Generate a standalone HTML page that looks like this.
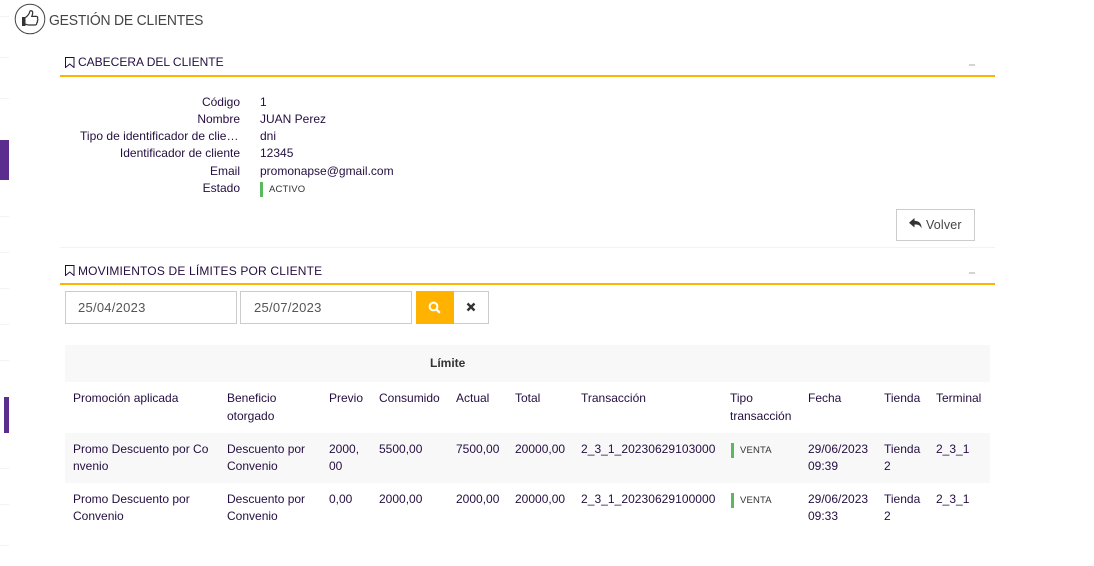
<!DOCTYPE html>
<html lang="es"><head><meta charset="utf-8"><title>Gestión de clientes</title>
<style>
html,body{margin:0;padding:0;background:#fff}
#p{position:relative;width:1094px;height:566px;overflow:hidden;background:#fff;font-family:"Liberation Sans",Arial,sans-serif;font-size:12px;color:#240e40}
#p div,#p svg{position:absolute}
.t{white-space:nowrap;line-height:14px;letter-spacing:0}
.r{text-align:right;width:220px;left:20px}
.l{left:0;width:9px;height:1px;background:#f3f3f3}
.h{font-size:12px;color:#240e40}
.b{height:2px;background:#ffb300;left:60px;width:935px}
.m{left:969px;width:6px;height:2px;background:#d4d4d4}
.g{width:3px;background:#5cb85c}
.s{font-size:9.500px;color:#333;letter-spacing:.15px}
.i{height:31px;border:1px solid #ccc;background:#fff;color:#555;font-size:13px;line-height:31px;letter-spacing:.25px;box-sizing:content-box}
.bg{background:#f8f8f8;left:65px;width:925px}
</style></head><body><div id="p">
<div class="l" style="top:16px"></div><div class="l" style="top:57px"></div><div class="l" style="top:98px"></div>
<div style="left:0;top:140px;width:9px;height:40px;background:#5b2d8e"></div>
<div class="l" style="top:216px"></div><div class="l" style="top:252px"></div><div class="l" style="top:288px"></div><div class="l" style="top:324px"></div><div class="l" style="top:360px"></div>
<div style="left:4px;top:397px;width:5px;height:36px;background:#5b2d8e"></div>
<div class="l" style="top:468px"></div><div class="l" style="top:504px"></div><div class="l" style="top:545px"></div>

<svg style="left:14px;top:3px" width="32" height="32" viewBox="0 0 32 32"><circle cx="16" cy="16" r="14.800" fill="none" stroke="#444" stroke-width="1"/><path d="M8 14h3.500v9H8z" fill="#333"/><path d="M11.500 14.500c2-1.500 3.800-3.500 4.300-6 .3-1.300 2.700-1 2.900 1 .1 1.300-.4 2.700-.9 3.900h4.500c1.300 0 1.700 1.300 1.200 2.200.6.700.5 1.700-.2 2.300.4.800.1 1.700-.6 2.100.2 1.100-.4 2-1.500 2h-6.500c-1.300 0-2.200-.5-3.200-.9" fill="none" stroke="#333" stroke-width="1.200"/></svg>
<div class="t" style="left:49px;top:12px;font-size:15px;line-height:18px;color:#444;letter-spacing:-.2px;transform:scaleX(.928);transform-origin:0 0">GESTIÓN DE CLIENTES</div>

<svg style="left:65px;top:57px" width="10" height="11" viewBox="0 0 10 11"><path d="M.5.500h8.500v10L4.750 7 .5 10.500z" fill="none" stroke="#240e40" stroke-width="1"/></svg>
<div class="t h" style="left:78px;top:55px">CABECERA DEL CLIENTE</div>
<div class="m" style="top:64px"></div>
<div class="b" style="top:75px"></div>

<div class="t r" style="top:95px">Código</div><div class="t" style="left:260px;top:95px">1</div>
<div class="t r" style="top:112px">Nombre</div><div class="t" style="left:260px;top:112px">JUAN Perez</div>
<div class="t" style="left:80px;top:129px;letter-spacing:.03px">Tipo de identificador de clie…</div><div class="t" style="left:260px;top:129px">dni</div>
<div class="t r" style="top:146px">Identificador de cliente</div><div class="t" style="left:260px;top:146px">12345</div>
<div class="t r" style="top:164px">Email</div><div class="t" style="left:260px;top:164px">promonapse@gmail.com</div>
<div class="t r" style="top:181px">Estado</div>
<div class="g" style="left:260px;top:182px;height:15px"></div><div class="t s" style="left:269px;top:183px">ACTIVO</div>

<div style="left:896px;top:209px;width:77px;height:30px;border:1px solid #ccc"></div>
<svg style="left:909px;top:218px" width="14" height="13" viewBox="0 0 14 13"><path d="M5.500 0 0 4.800 5.500 9.500V6.500c3.500-.1 5.700.5 7 4 .2-4.800-2.200-7.500-7-7.700z" fill="#333"/></svg>
<div class="t" style="left:926px;top:218px;color:#444;letter-spacing:.15px;font-size:12.500px">Volver</div>
<div style="left:60px;top:247px;width:935px;height:1px;background:#f3f3f3"></div>

<svg style="left:65px;top:265px" width="10" height="11" viewBox="0 0 10 11"><path d="M.5.500h8.500v10L4.750 7 .5 10.500z" fill="none" stroke="#240e40" stroke-width="1"/></svg>
<div class="t h" style="left:78px;top:264px;letter-spacing:.17px">MOVIMIENTOS DE LÍMITES POR CLIENTE</div>
<div class="m" style="top:272px"></div>
<div class="b" style="top:283px"></div>

<div class="i" style="left:65px;top:291px;width:158px;padding-left:12px">25/04/2023</div>
<div class="i" style="left:240px;top:291px;width:157px;padding-left:13px">25/07/2023</div>
<div style="left:416px;top:291px;width:38px;height:33px;background:#ffb300"></div>
<svg style="left:428px;top:301px" width="13" height="13" viewBox="0 0 13 13"><circle cx="5.500" cy="5.500" r="3.900" fill="none" stroke="#fff" stroke-width="2"/><path d="M8.300 8.300 11.800 11.800" stroke="#fff" stroke-width="2.200"/></svg>
<div style="left:454px;top:291px;width:34px;height:31px;border:1px solid #ccc;border-left:0"></div>
<svg style="left:466px;top:302px" width="10" height="10" viewBox="0 0 10 10"><path d="M1.500 1.500 8.500 8.500M8.500 1.500 1.500 8.500" stroke="#333" stroke-width="2.400"/></svg>

<div class="bg" style="top:345px;height:37px"></div>
<div class="t" style="left:430px;top:356px;font-weight:bold;color:#333">Límite</div>

<div class="t" style="left:73px;top:391px">Promoción aplicada</div>
<div class="t" style="left:227px;top:391px">Beneficio</div><div class="t" style="left:227px;top:409px">otorgado</div>
<div class="t" style="left:329px;top:391px">Previo</div>
<div class="t" style="left:379px;top:391px">Consumido</div>
<div class="t" style="left:456px;top:391px">Actual</div>
<div class="t" style="left:515px;top:391px">Total</div>
<div class="t" style="left:581px;top:391px">Transacción</div>
<div class="t" style="left:730px;top:391px">Tipo</div><div class="t" style="left:730px;top:409px">transacción</div>
<div class="t" style="left:808px;top:391px">Fecha</div>
<div class="t" style="left:884px;top:391px">Tienda</div>
<div class="t" style="left:936px;top:391px">Terminal</div>

<div class="bg" style="top:433px;height:50px"></div>
<div class="t" style="left:73px;top:442px">Promo Descuento por Co</div><div class="t" style="left:73px;top:459px">nvenio</div>
<div class="t" style="left:227px;top:442px">Descuento por</div><div class="t" style="left:227px;top:459px">Convenio</div>
<div class="t" style="left:329px;top:442px">2000,</div><div class="t" style="left:329px;top:459px">00</div>
<div class="t" style="left:379px;top:442px">5500,00</div>
<div class="t" style="left:456px;top:442px">7500,00</div>
<div class="t" style="left:515px;top:442px">20000,00</div>
<div class="t" style="left:581px;top:442px;letter-spacing:.05px">2_3_1_20230629103000</div>
<div class="g" style="left:731px;top:443px;height:15px"></div><div class="t s" style="left:740px;top:444px">VENTA</div>
<div class="t" style="left:808px;top:442px">29/06/2023</div><div class="t" style="left:808px;top:459px">09:39</div>
<div class="t" style="left:884px;top:442px">Tienda</div><div class="t" style="left:884px;top:459px">2</div>
<div class="t" style="left:936px;top:442px">2_3_1</div>

<div class="t" style="left:73px;top:492px">Promo Descuento por</div><div class="t" style="left:73px;top:509px">Convenio</div>
<div class="t" style="left:227px;top:492px">Descuento por</div><div class="t" style="left:227px;top:509px">Convenio</div>
<div class="t" style="left:329px;top:492px">0,00</div>
<div class="t" style="left:379px;top:492px">2000,00</div>
<div class="t" style="left:456px;top:492px">2000,00</div>
<div class="t" style="left:515px;top:492px">20000,00</div>
<div class="t" style="left:581px;top:492px;letter-spacing:.05px">2_3_1_20230629100000</div>
<div class="g" style="left:731px;top:493px;height:15px"></div><div class="t s" style="left:740px;top:494px">VENTA</div>
<div class="t" style="left:808px;top:492px">29/06/2023</div><div class="t" style="left:808px;top:509px">09:33</div>
<div class="t" style="left:884px;top:492px">Tienda</div><div class="t" style="left:884px;top:509px">2</div>
<div class="t" style="left:936px;top:492px">2_3_1</div>
</div></body></html>
